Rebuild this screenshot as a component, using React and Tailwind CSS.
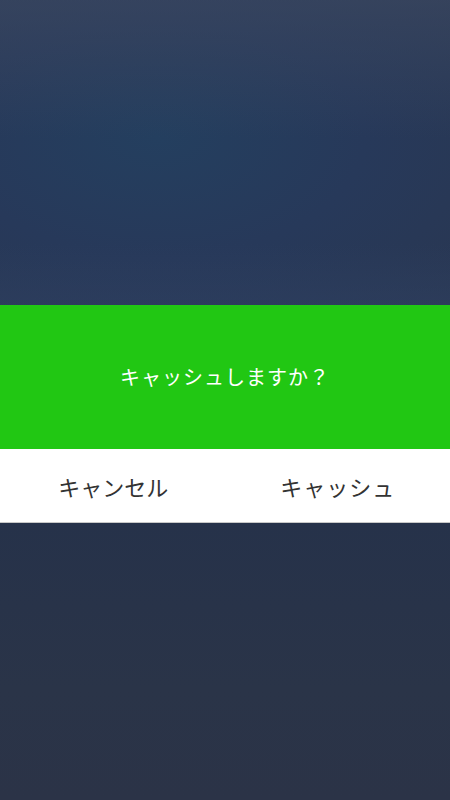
export default function App() {
  const jp = { fontFamily: '"Noto Sans CJK JP", "Noto Sans", sans-serif' };
  return (
    <div className="w-[450px] h-[800px] flex flex-col overflow-hidden" style={jp}>
      <div className="h-[305px] bg-[radial-gradient(ellipse_at_35%_45%,#243f5f_0%,#27395a_50%,#293752_100%)] relative">
        <div className="absolute inset-0 bg-[linear-gradient(180deg,rgba(62,74,98,0.6)_0%,rgba(0,0,0,0)_45%,rgba(0,0,0,0)_80%,rgba(48,66,100,0.45)_100%)]" />
      </div>
      <div className="h-[144px] bg-[#21c713] flex items-center justify-center">
        <span className="text-white text-[20px] tracking-[1px] font-normal leading-none">キャッシュしますか？</span>
      </div>
      <div className="h-[73px] bg-white flex">
        <div className="flex-1 flex items-center justify-center text-[22px] text-[#333333] leading-none pl-[1px]">キャンセル</div>
        <div className="flex-1 flex items-center justify-center text-[22px] text-[#333333] leading-none tracking-[1px]">キャッシュ</div>
      </div>
      <div className="h-[1px] bg-[#c8c8c8]" />
      <div className="flex-1 bg-[linear-gradient(180deg,#26324a_0%,#2a3448_60%,#2b3347_100%)]" />
    </div>
  );
}
